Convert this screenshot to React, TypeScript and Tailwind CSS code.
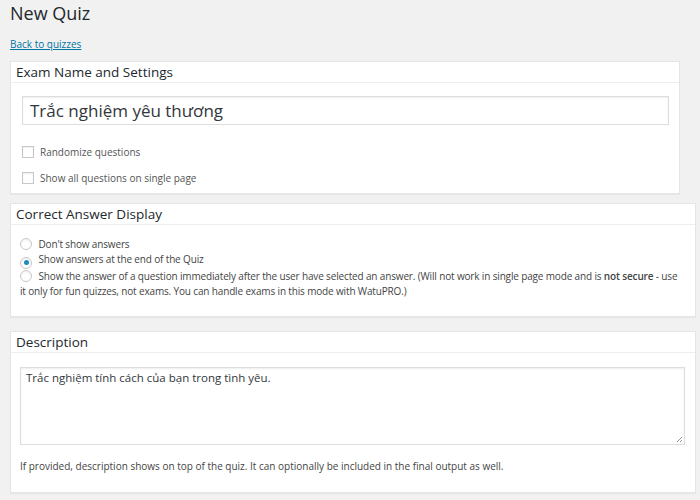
import React from 'react';

const Box = ({ title, className, children }: { title: string; className: string; children: React.ReactNode }) => (
    <div className={`bg-white border border-[#e5e5e5] shadow-[0_1px_1px_rgba(0,0,0,0.04)] ${className}`}>
        <h3 className="h-[21px] border-b border-[#eeeeee] px-[5px] text-[13.5px] leading-[20px] text-[#23282d]">{title}</h3>
        {children}
    </div>
);

const Check = ({ label }: { label: string }) => (
    <label className="flex items-center gap-[6px] h-[16px] text-[10px] text-[#555]">
        <span className="w-[12px] h-[12px] border border-[#c8c8c8] bg-white shadow-[inset_0_1px_2px_rgba(0,0,0,0.07)]" />
        {label}
    </label>
);

const Radio = ({ checked }: { checked?: boolean }) => (
    <span className="inline-flex items-center justify-center w-[12px] h-[12px] rounded-full border border-[#c8c8c8] bg-white align-[-2px] mr-[4px] shadow-[inset_0_1px_2px_rgba(0,0,0,0.07)]">
        {checked && <span className="w-[5px] h-[5px] rounded-full bg-[#1e8cbe]" />}
    </span>
);

export default function App() {
    return (
        <div className="w-[700px] h-[500px] overflow-hidden bg-[#f1f1f1] font-['Open_Sans',sans-serif]">
            <h1 className="pl-[10px] pt-[1px] text-[18px] leading-[24px] text-[#23282d]">New Quiz</h1>
            <a href="#" className="block ml-[10px] mt-[12px] text-[10px] leading-[14px] text-[#0074a2] underline">Back to quizzes</a>

            <Box title="Exam Name and Settings" className="ml-[10px] mt-[10px] w-[670px] h-[133px]">
                <div className="ml-[11px] mt-[13px] w-[647px] h-[29px] border border-[#ddd] shadow-[inset_0_1px_2px_rgba(0,0,0,0.07)] px-[7px] text-[17px] leading-[27px] text-[#32373c]">
                    Trắc nghiệm yêu thương
                </div>
                <div className="ml-[11px] mt-[19px] flex flex-col gap-[10px]">
                    <Check label="Randomize questions" />
                    <Check label="Show all questions on single page" />
                </div>
            </Box>

            <Box title="Correct Answer Display" className="ml-[10px] mt-[9px] w-[686px] h-[114px]">
                <div className="pl-[9px] pr-[15px] pt-[12px] text-[10px] leading-[15px] tracking-[-0.15px] text-[#444]">
                    <div><Radio /> Don't show answers</div>
                    <div><Radio checked /> Show answers at the end of the Quiz</div>
                    <div>
                        <Radio /> Show the answer of a question immediately after the user have selected an answer. (Will not work in single page mode and is <b className="font-semibold">not secure</b> - use it only for fun quizzes, not exams. You can handle exams in this mode with WatuPRO.)
                    </div>
                </div>
            </Box>

            <Box title="Description" className="ml-[10px] mt-[14px] w-[686px] h-[162px]">
                <div className="relative ml-[9px] mt-[14px] w-[665px] h-[78px] border border-[#ddd] shadow-[inset_0_1px_2px_rgba(0,0,0,0.07)] px-[5px] pt-[1px] text-[11.5px] leading-[18px] text-[#32373c]">
                    Trắc nghiệm tính cách của bạn trong tình yêu.
                    <svg className="absolute right-[1px] bottom-[1px]" width="7" height="7" viewBox="0 0 7 7">
                        <path d="M6 1L1 6M6 4L4 6" stroke="#999" strokeWidth="1" />
                    </svg>
                </div>
                <p className="ml-[9px] mt-[14px] text-[10px] leading-[15px] text-[#444]">
                    If provided, description shows on top of the quiz. It can optionally be included in the final output as well.
                </p>
            </Box>
        </div>
    );
}
